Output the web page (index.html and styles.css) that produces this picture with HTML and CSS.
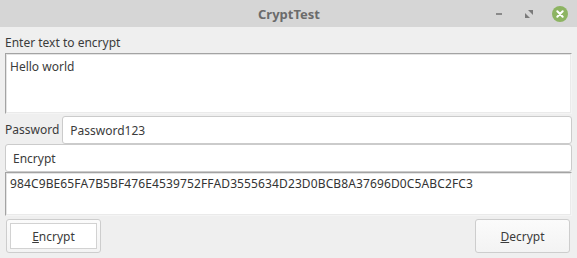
FILE: index.html
```html
<!DOCTYPE html>
<html lang="en">
<head>
    <meta charset="UTF-8">
    <title>CryptTest</title>
    <link rel="stylesheet" href="styles.css">
</head>
<body>
    <div class="window">
        <div class="titlebar">
            <div></div>
            <div class="title">CryptTest</div>
            <div class="controls">
                <span class="ctl-min"></span>
                <svg class="ctl-max" width="8" height="8" viewBox="0 0 8 8">
                    <polygon points="8,0 8,5 3,0" fill="#7a7a7a"/>
                    <polygon points="0,8 0,3 5,8" fill="#7a7a7a"/>
                </svg>
                <span class="ctl-close">
                    <svg width="16" height="16" viewBox="0 0 16 16">
                        <circle cx="8" cy="8" r="8" fill="#8db462"/>
                        <path d="M5.3 5.3 L10.7 10.7 M10.7 5.3 L5.3 10.7" stroke="#fff" stroke-width="2" stroke-linecap="round"/>
                    </svg>
                </span>
            </div>
        </div>

        <div class="content">
            <div class="label">Enter text to encrypt</div>
            <div class="textbox input-box">Hello world</div>

            <div class="password-row">
                <span class="label">Password</span>
                <div class="line-edit password">Password123</div>
            </div>

            <div class="line-edit">Encrypt</div>

            <div class="textbox output-box">984C9BE65FA7B5BF476E4539752FFAD3555634D23D0BCB8A37696D0C5ABC2FC3</div>

            <div class="buttons">
                <button class="btn btn-default"><span class="focus"><u>E</u>ncrypt</span></button>
                <button class="btn"><u>D</u>ecrypt</button>
            </div>
        </div>
    </div>
</body>
</html>
```

FILE: styles.css
```css
body {
    margin: 0;
    font-family: "Noto Sans", "Open Sans", sans-serif;
    font-size: 12px;
    color: #3b3b3b;
    background-color: #efefef;
}
.window {
    width: 577px;
    height: 258px;
    overflow: hidden;
}
.titlebar {
    height: 27px;
    background-color: #d6d6d6;
    display: grid;
    grid-template-columns: 1fr auto 1fr;
    align-items: center;
}
.title {
    font-size: 13px;
    font-weight: bold;
    color: #6b6b6b;
    padding-left: 1px;
}
.controls {
    display: flex;
    justify-content: flex-end;
    align-items: center;
    padding-right: 9px;
}
.ctl-min {
    width: 6px;
    height: 2px;
    background: #8a8a8a;
    margin-right: 23px;
}
.ctl-max {
    margin-right: 19px;
}
.ctl-close {
    display: flex;
}
.content {
    padding: 6px 5px 0 5px;
}
.label {
    line-height: 20px;
}
.textbox {
    background: #fff;
    border: 1px solid;
    border-color: #a3a3a3 #f4f4f4 #f4f4f4 #a3a3a3;
    box-shadow: inset 1px 1px 0 #e4e4e4, inset -1px -1px 0 #eaeaea;
    padding: 3px 4px;
    line-height: 16px;
    box-sizing: border-box;
}
.input-box {
    height: 61px;
    padding-top: 5px;
}
.output-box {
    height: 44px;
    color: #333;
    letter-spacing: 0.12px;
}
.password-row {
    display: flex;
    align-items: center;
    gap: 3px;
    margin-top: 2px;
}
.line-edit {
    height: 28px;
    box-sizing: border-box;
    background: #fff;
    border: 1px solid #cbcbcb;
    border-radius: 3px;
    padding: 0 7px;
    display: flex;
    align-items: center;
}
.password {
    flex: 1;
}
.buttons {
    display: flex;
    justify-content: space-between;
    padding: 3px 2px 0 1px;
}
.btn {
    font-family: inherit;
    font-size: 12px;
    color: #3b3b3b;
    height: 34px;
    width: 95px;
    background: linear-gradient(#fbfbfb, #f3f3f3);
    border: 1px solid #cdcdcd;
    border-radius: 3px;
    padding: 0;
}
.btn-default {
    padding: 3px;
}
.focus {
    display: flex;
    align-items: center;
    justify-content: center;
    height: 100%;
    box-sizing: border-box;
    border: 1px solid #d2d2d2;
    background: #fff;
}
```
